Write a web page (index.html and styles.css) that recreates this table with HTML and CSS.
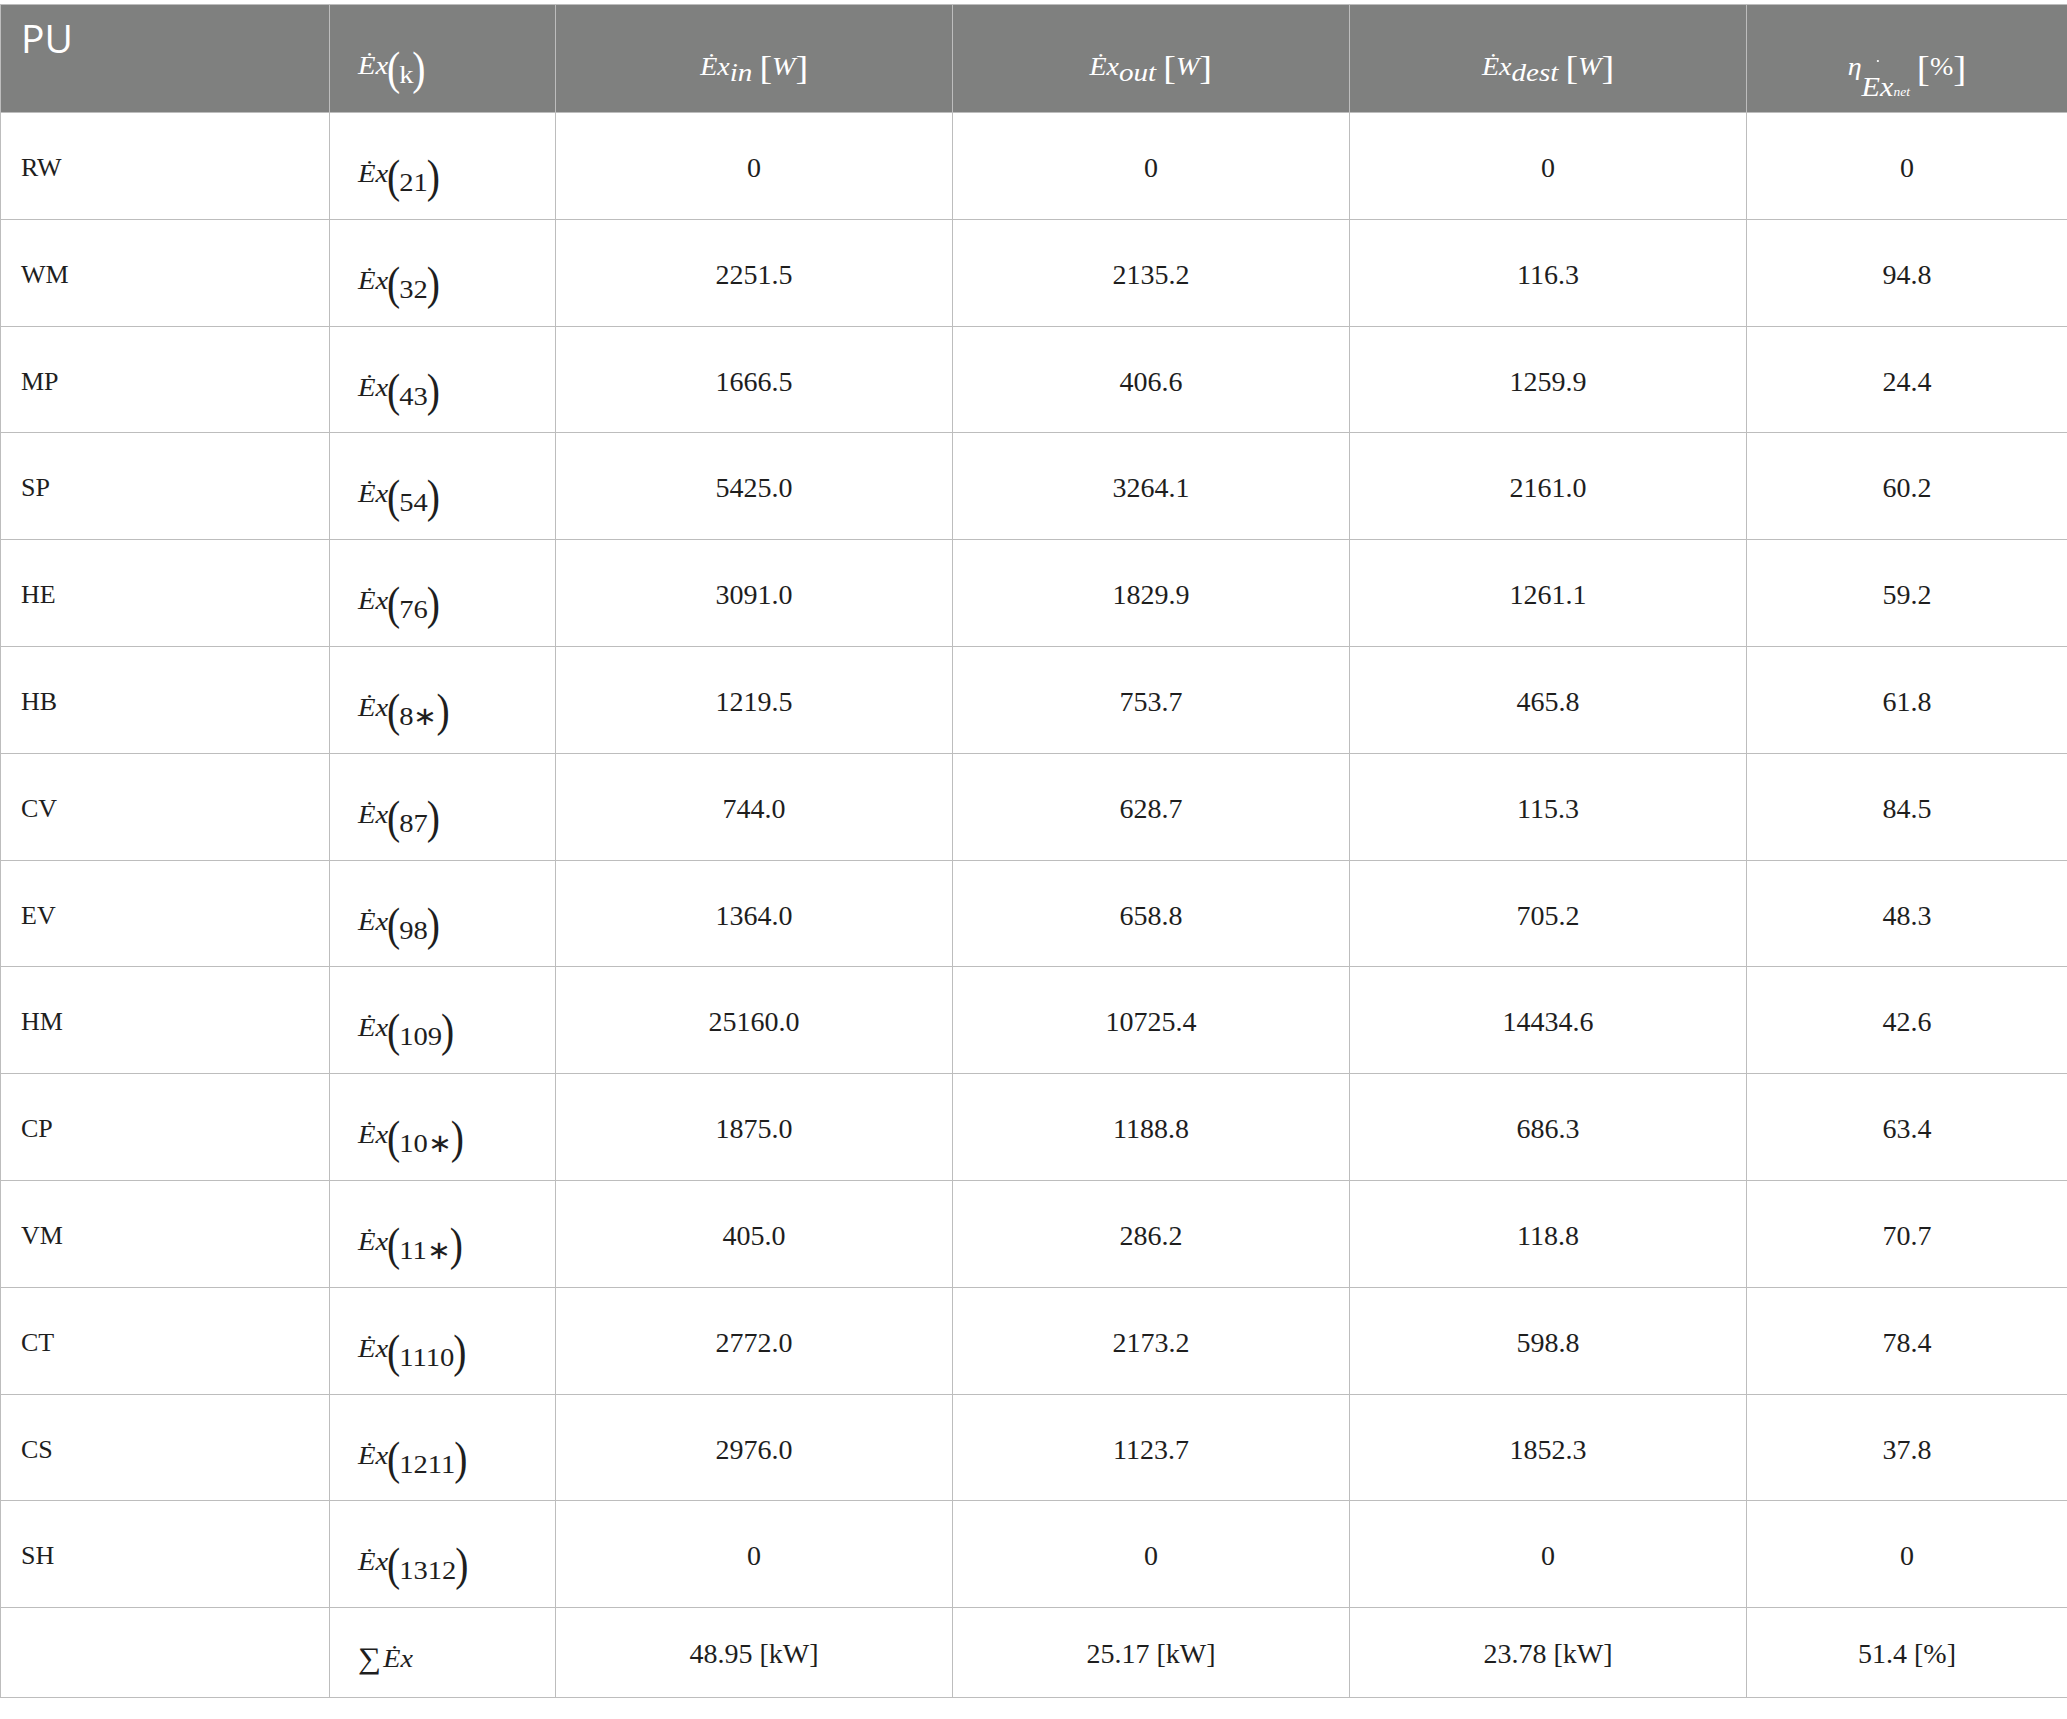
FILE: index.html
```html
<!DOCTYPE html>
<html>
<head>
<meta charset="utf-8">
<link rel="stylesheet" href="styles.css">
</head>
<body>
<table class="tbl">
<colgroup><col class="c1"><col class="c2"><col class="c3"><col class="c4"><col class="c5"><col class="c6"></colgroup>
<thead>
<tr class="hd">
<th class="pu">PU</th>
<th class="mc"><span class="m"><span class="E">Ėx</span><span class="sub"><span class="par">(</span>k<span class="par">)</span></span></span></th>
<th class="hc"><span class="hm"><span class="E">Ėx</span><span class="hs">in</span> <span class="br">[</span><span class="W">W</span><span class="br">]</span></span></th>
<th class="hc"><span class="hm"><span class="E">Ėx</span><span class="hs">out</span> <span class="br">[</span><span class="W">W</span><span class="br">]</span></span></th>
<th class="hc"><span class="hm"><span class="E">Ėx</span><span class="hs">dest</span> <span class="br">[</span><span class="W">W</span><span class="br">]</span></span></th>
<th class="hc"><span class="hm"><span class="eta">η</span><span class="es"><span class="dE">E</span>x<span class="net">net</span></span> <span class="br2">[</span>%<span class="br2">]</span></span></th>
</tr>
</thead>
<tbody>
<tr><td class="lbl">RW</td><td class="mc"><span class="m"><span class="E">Ėx</span><span class="sub"><span class="par">(</span>21<span class="par">)</span></span></span></td><td class="num">0</td><td class="num">0</td><td class="num">0</td><td class="num">0</td></tr>
<tr><td class="lbl">WM</td><td class="mc"><span class="m"><span class="E">Ėx</span><span class="sub"><span class="par">(</span>32<span class="par">)</span></span></span></td><td class="num">2251.5</td><td class="num">2135.2</td><td class="num">116.3</td><td class="num">94.8</td></tr>
<tr><td class="lbl">MP</td><td class="mc"><span class="m"><span class="E">Ėx</span><span class="sub"><span class="par">(</span>43<span class="par">)</span></span></span></td><td class="num">1666.5</td><td class="num">406.6</td><td class="num">1259.9</td><td class="num">24.4</td></tr>
<tr><td class="lbl">SP</td><td class="mc"><span class="m"><span class="E">Ėx</span><span class="sub"><span class="par">(</span>54<span class="par">)</span></span></span></td><td class="num">5425.0</td><td class="num">3264.1</td><td class="num">2161.0</td><td class="num">60.2</td></tr>
<tr><td class="lbl">HE</td><td class="mc"><span class="m"><span class="E">Ėx</span><span class="sub"><span class="par">(</span>76<span class="par">)</span></span></span></td><td class="num">3091.0</td><td class="num">1829.9</td><td class="num">1261.1</td><td class="num">59.2</td></tr>
<tr><td class="lbl">HB</td><td class="mc"><span class="m"><span class="E">Ėx</span><span class="sub"><span class="par">(</span>8∗<span class="par">)</span></span></span></td><td class="num">1219.5</td><td class="num">753.7</td><td class="num">465.8</td><td class="num">61.8</td></tr>
<tr><td class="lbl">CV</td><td class="mc"><span class="m"><span class="E">Ėx</span><span class="sub"><span class="par">(</span>87<span class="par">)</span></span></span></td><td class="num">744.0</td><td class="num">628.7</td><td class="num">115.3</td><td class="num">84.5</td></tr>
<tr><td class="lbl">EV</td><td class="mc"><span class="m"><span class="E">Ėx</span><span class="sub"><span class="par">(</span>98<span class="par">)</span></span></span></td><td class="num">1364.0</td><td class="num">658.8</td><td class="num">705.2</td><td class="num">48.3</td></tr>
<tr><td class="lbl">HM</td><td class="mc"><span class="m"><span class="E">Ėx</span><span class="sub"><span class="par">(</span>109<span class="par">)</span></span></span></td><td class="num">25160.0</td><td class="num">10725.4</td><td class="num">14434.6</td><td class="num">42.6</td></tr>
<tr><td class="lbl">CP</td><td class="mc"><span class="m"><span class="E">Ėx</span><span class="sub"><span class="par">(</span>10∗<span class="par">)</span></span></span></td><td class="num">1875.0</td><td class="num">1188.8</td><td class="num">686.3</td><td class="num">63.4</td></tr>
<tr><td class="lbl">VM</td><td class="mc"><span class="m"><span class="E">Ėx</span><span class="sub"><span class="par">(</span>11∗<span class="par">)</span></span></span></td><td class="num">405.0</td><td class="num">286.2</td><td class="num">118.8</td><td class="num">70.7</td></tr>
<tr><td class="lbl">CT</td><td class="mc"><span class="m"><span class="E">Ėx</span><span class="sub"><span class="par">(</span>1110<span class="par">)</span></span></span></td><td class="num">2772.0</td><td class="num">2173.2</td><td class="num">598.8</td><td class="num">78.4</td></tr>
<tr><td class="lbl">CS</td><td class="mc"><span class="m"><span class="E">Ėx</span><span class="sub"><span class="par">(</span>1211<span class="par">)</span></span></span></td><td class="num">2976.0</td><td class="num">1123.7</td><td class="num">1852.3</td><td class="num">37.8</td></tr>
<tr><td class="lbl">SH</td><td class="mc"><span class="m"><span class="E">Ėx</span><span class="sub"><span class="par">(</span>1312<span class="par">)</span></span></span></td><td class="num">0</td><td class="num">0</td><td class="num">0</td><td class="num">0</td></tr>
<tr class="sum"><td class="lbl"></td><td class="mc"><span class="sm"><span class="sig">∑</span><span class="E">Ėx</span></span></td><td class="num">48.95 [kW]</td><td class="num">25.17 [kW]</td><td class="num">23.78 [kW]</td><td class="num">51.4 [%]</td></tr>
</tbody>
</table>
</body>
</html>
```

FILE: styles.css
```css
html, body {
  margin: 0;
  background: #ffffff;
}
body {
  padding-top: 4px;
  font-family: "Liberation Serif", "Times New Roman", serif;
  color: #1e1e1e;
}
.tbl {
  width: 2067px;
  table-layout: fixed;
  border-collapse: collapse;
}
.c1 { width: 329px; }
.c2 { width: 226px; }
.c3, .c4, .c5 { width: 397px; }
.c6 { width: 321px; }

.tbl th, .tbl td {
  border: 1px solid #bdbdbd;
  padding: 40px 20px 0 20px;
  vertical-align: top;
  font-weight: normal;
  text-align: left;
  font-size: 26px;
  line-height: 30px;
  white-space: nowrap;
}
.hd {
  height: 108px;
  background: #7f807f;
  color: #ffffff;
}
tbody tr { height: 106.8px; }
tbody tr.sum { height: 90px; }
tbody tr.sum td { padding-top: 31px; }

.tbl th.pu {
  font-family: "Open Sans", "Noto Sans", sans-serif;
  font-size: 39px;
  line-height: 39px;
  padding-top: 13px;
}

.tbl td.num {
  text-align: center;
  font-size: 28px;
}

/* data math */
.m {
  display: inline-block;
  transform: scaleX(1.1);
  transform-origin: 0 50%;
  font-size: 26px;
  line-height: 30px;
  margin-left: 8px;
  vertical-align: -6px;
}
.E { font-style: italic; }
.m .sub {
  font-size: 26px;
  line-height: 0;
  vertical-align: -9px;
}
.m .par {
  display: inline-block;
  font-size: 36px;
  line-height: 1;
  transform: scaleY(1.3);
  vertical-align: 3px;
  margin: 0 -1px;
}

/* header math */
.tbl th.hc {
  text-align: center;
  font-size: 24px;
  line-height: 30px;
  padding-top: 47px;
}
.hm {
  display: inline-block;
  transform: scaleX(1.12);
  font-size: 25px;
  line-height: 30px;
}
.hs {
  font-style: italic;
  font-size: 26px;
  line-height: 0;
  vertical-align: -6px;
}
.br {
  font-size: 34px;
  line-height: 0;
  vertical-align: -4px;
}
.br2 {
  font-size: 35px;
  line-height: 0;
  vertical-align: -6px;
}
.W { font-style: italic; }
.eta { font-style: italic; }
.es {
  font-style: italic;
  font-size: 27px;
  line-height: 0;
  vertical-align: -21px;
}
.dE { position: relative; }
.dE::after {
  content: "";
  position: absolute;
  left: 14px;
  top: -12px;
  width: 2px;
  height: 2px;
  border-radius: 50%;
  background: #ffffff;
}
.net {
  font-size: 12px;
  font-style: italic;
}

/* sum */
.sm {
  display: inline-block;
  transform: scaleX(1.08);
  transform-origin: 0 50%;
  font-size: 26px;
  line-height: 30px;
  margin-left: 8px;
  vertical-align: -5px;
}
.sig {
  font-style: normal;
  font-size: 30px;
  line-height: 0;
  vertical-align: -1px;
  margin-right: 2px;
}
```
